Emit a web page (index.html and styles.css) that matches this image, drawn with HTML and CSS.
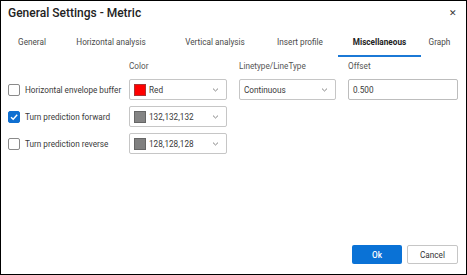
FILE: index.html
```html
<!DOCTYPE html>
<html>
<head>
<meta charset="utf-8">
<link rel="stylesheet" href="styles.css">
</head>
<body>
<div class="dialog">
  <div class="header">
    <div class="title">General Settings - Metric</div>
    <div class="close">✕</div>
  </div>
  <div class="tabs">
    <div class="tab t1">General</div>
    <div class="tab t2">Horizontal analysis</div>
    <div class="tab t3">Vertical analysis</div>
    <div class="tab t4">Insert profile</div>
    <div class="tab t5 active">Miscellaneous</div>
    <div class="tab t6">Graph</div>
  </div>
  <div class="grid">
    <div></div>
    <div class="colhead">Color</div>
    <div class="colhead">Linetype/LineType</div>
    <div class="colhead">Offset</div>

    <div class="check"><span class="box"></span><span>Horizontal envelope buffer</span></div>
    <div class="select"><span class="swatch red"></span><span class="val">Red</span><svg class="chev" width="7" height="4" viewBox="0 0 7 4"><polyline points="1,0.6 3.5,3 6,0.6" fill="none" stroke="#777" stroke-width="0.9"/></svg></div>
    <div class="select"><span class="val">Continuous</span><svg class="chev" width="7" height="4" viewBox="0 0 7 4"><polyline points="1,0.6 3.5,3 6,0.6" fill="none" stroke="#777" stroke-width="0.9"/></svg></div>
    <div class="input">0.500</div>

    <div class="check"><span class="box checked"><svg width="10" height="10" viewBox="0 0 10 10"><polyline points="2,5.2 4.2,7.3 8.2,2.8" fill="none" stroke="#fff" stroke-width="1.4"/></svg></span><span>Turn prediction forward</span></div>
    <div class="select"><span class="swatch g132"></span><span class="val">132,132,132</span><svg class="chev" width="7" height="4" viewBox="0 0 7 4"><polyline points="1,0.6 3.5,3 6,0.6" fill="none" stroke="#777" stroke-width="0.9"/></svg></div>
    <div></div>
    <div></div>

    <div class="check"><span class="box"></span><span>Turn prediction reverse</span></div>
    <div class="select"><span class="swatch g128"></span><span class="val">128,128,128</span><svg class="chev" width="7" height="4" viewBox="0 0 7 4"><polyline points="1,0.6 3.5,3 6,0.6" fill="none" stroke="#777" stroke-width="0.9"/></svg></div>
    <div></div>
    <div></div>
  </div>
  <div class="footer">
    <div class="btn ok">Ok</div>
    <div class="btn cancel">Cancel</div>
  </div>
</div>
</body>
</html>
```
FILE: styles.css
```css
html, body {
  margin: 0;
  padding: 0;
  background: #fff;
}
body {
  font-family: Roboto, "Liberation Sans", sans-serif;
  font-size: 8.2px;
  color: #3a3a3a;
}
.dialog {
  width: 467px;
  height: 275px;
  box-sizing: border-box;
  border: 1px solid #000;
  display: flex;
  flex-direction: column;
}
.header {
  height: 24px;
  display: flex;
  align-items: center;
  justify-content: space-between;
  padding: 0 9px 0 7px;
}
.title {
  font-size: 12px;
  font-weight: 500;
  color: #222;
}
.close {
  font-size: 9px;
  color: #333;
}
.tabs {
  display: flex;
  margin-top: 6px;
  padding-left: 9px;
  height: 26px;
}
.tab {
  box-sizing: border-box;
  height: 26px;
  display: flex;
  align-items: center;
  justify-content: center;
  padding-bottom: 2px;
  color: #4a4a4a;
  border-bottom: 2px solid transparent;
}
.t1 { width: 44px; }
.t2 { width: 114px; }
.t3 { width: 94px; }
.t4 { width: 76px; }
.t5 { width: 83px; }
.t6 { width: 37px; }
.tab.active {
  font-weight: 700;
  color: #222;
  border-bottom-color: #1b79d6;
}
.grid {
  display: grid;
  grid-template-columns: 109px 98px 97px 110px;
  grid-template-rows: 14px 21px 21px 21px;
  column-gap: 12px;
  row-gap: 6px;
  padding: 2px 0 0 7px;
}
.colhead {
  display: flex;
  align-items: center;
  color: #555;
}
.check {
  display: flex;
  align-items: center;
  gap: 5px;
  white-space: nowrap;
}
.box {
  width: 12px;
  height: 12px;
  box-sizing: border-box;
  border: 1px solid #8a8a8a;
  border-radius: 2px;
  display: flex;
  align-items: center;
  justify-content: center;
  flex: none;
}
.box.checked {
  background: #0f6fd1;
  border-color: #0f6fd1;
}
.select, .input {
  box-sizing: border-box;
  border: 1px solid #c6c6c6;
  border-radius: 2px;
  display: flex;
  align-items: center;
  padding: 0 4px;
}
.input {
  border-color: #bdbdbd;
}
.swatch {
  width: 12px;
  height: 12px;
  box-sizing: border-box;
  border: 1px solid #777;
  margin-right: 3px;
  flex: none;
}
.red { background: #f00; border-color: #aa3333; }
.g132 { background: #848484; border-color: #666; }
.g128 { background: #808080; border-color: #666; }
.val {
  flex: 1;
}
.chev {
  margin-right: 3px;
}
.footer {
  margin-top: auto;
  display: flex;
  justify-content: flex-end;
  gap: 5px;
  padding: 0 8px 10px 0;
}
.btn {
  height: 19px;
  box-sizing: border-box;
  display: flex;
  align-items: center;
  justify-content: center;
  border-radius: 2px;
}
.ok {
  width: 50px;
  background: #0a72d6;
  color: #fff;
  font-weight: 500;
}
.cancel {
  width: 51px;
  border: 1px solid #c6c6c6;
  color: #333;
}
```
